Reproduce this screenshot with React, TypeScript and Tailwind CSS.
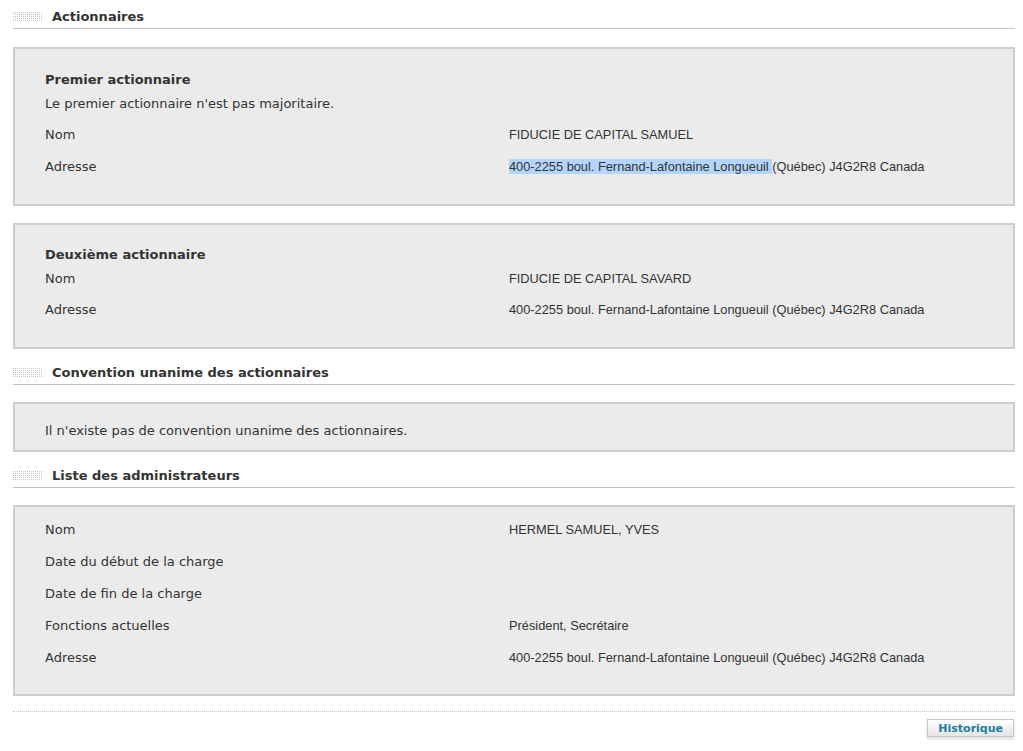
const label = "font-['DejaVu_Sans',Verdana,sans-serif] text-[13px] text-[#333]"
const value = "font-['Liberation_Sans',Arial,sans-serif] text-[12.8px] text-[#333]"

function GridIcon() {
  return (
    <svg width="30" height="10" viewBox="0 0 30 10" className="shrink-0">
      <defs>
        <pattern id="dots" width="2" height="2" patternUnits="userSpaceOnUse">
          <rect width="1" height="1" fill="#c4c4c4" />
        </pattern>
      </defs>
      <rect width="30" height="10" fill="url(#dots)" />
    </svg>
  )
}

function Heading({ title, className = '' }: { title: string; className?: string }) {
  return (
    <div className={`flex items-center h-[24px] border-b border-[#c3c3c3] ${className}`}>
      <GridIcon />
      <span className="ml-[9px] font-['DejaVu_Sans',Verdana,sans-serif] text-[13px] font-bold text-[#333]">{title}</span>
    </div>
  )
}

function Row({ name, val, className = '' }: { name: string; val?: React.ReactNode; className?: string }) {
  return (
    <div className={`flex items-center h-[24px] ${className}`}>
      <div className={`w-[464px] shrink-0 ${label}`}>{name}</div>
      <div className={value}>{val}</div>
    </div>
  )
}

const ADDR = '400-2255 boul. Fernand-Lafontaine Longueuil (Québec) J4G2R8 Canada'

export default function App() {
  return (
    <div className="bg-white min-h-[751px] pl-[13px] pr-[8px] pt-[5px]">
      <Heading title="Actionnaires" />

      <div className="mt-[18px] border-2 border-[#cdcdcd] bg-[#ebebeb] pl-[30px] pt-[19px] pb-[25px]">
        <div className={`h-[24px] flex items-center font-bold ${label}`}>Premier actionnaire</div>
        <div className={`h-[24px] flex items-center ${label}`}>Le premier actionnaire n'est pas majoritaire.</div>
        <Row name="Nom" val="FIDUCIE DE CAPITAL SAMUEL" className="mt-[7px]" />
        <Row
          name="Adresse"
          className="mt-[8px]"
          val={
            <>
              <span className="bg-[#b4d5fb]">400-2255 boul. Fernand-Lafontaine Longueuil </span>(Québec) J4G2R8 Canada
            </>
          }
        />
      </div>

      <div className="mt-[17px] border-2 border-[#cdcdcd] bg-[#ebebeb] pl-[30px] pt-[18px] pb-[25px]">
        <div className={`h-[24px] flex items-center font-bold ${label}`}>Deuxième actionnaire</div>
        <Row name="Nom" val="FIDUCIE DE CAPITAL SAVARD" />
        <Row name="Adresse" val={ADDR} className="mt-[7px]" />
      </div>

      <Heading title="Convention unanime des actionnaires" className="mt-[12px]" />

      <div className="mt-[17px] border-2 border-[#cdcdcd] bg-[#ebebeb] pl-[30px] pt-[15px] pb-[7px]">
        <div className={`h-[24px] flex items-center ${label}`}>Il n'existe pas de convention unanime des actionnaires.</div>
      </div>

      <Heading title="Liste des administrateurs" className="mt-[12px]" />

      <div className="mt-[17px] border-2 border-[#cdcdcd] bg-[#ebebeb] pl-[30px] pt-[11px] pb-[24px] flex flex-col gap-[8px]">
        <Row name="Nom" val="HERMEL SAMUEL, YVES" />
        <Row name="Date du début de la charge" />
        <Row name="Date de fin de la charge" />
        <Row name="Fonctions actuelles" val="Président, Secrétaire" />
        <Row name="Adresse" val={ADDR} />
      </div>

      <div className="mt-[15px] border-t border-dotted border-[#c8c8c8]" />

      <div className="flex justify-end pt-[7px] pr-[1px]">
        <button
          type="button"
          className="h-[18px] px-[10px] border border-[#c6c6c6] bg-gradient-to-b from-white to-[#e4e4e4] shadow-[0_2px_3px_rgba(0,0,0,0.15)] font-['DejaVu_Sans',Verdana,sans-serif] text-[11px] font-bold text-[#1a7f9f] leading-none"
        >
          Historique
        </button>
      </div>
    </div>
  )
}
